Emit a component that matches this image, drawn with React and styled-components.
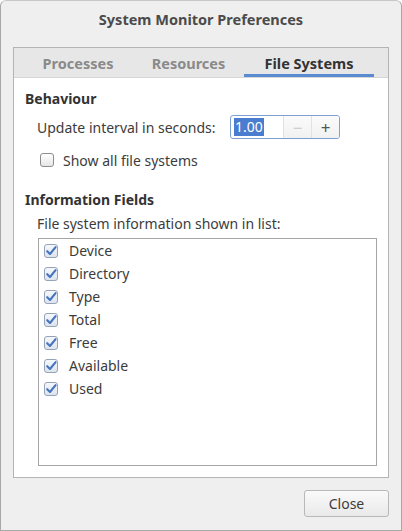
import React from "react";
import styled, { createGlobalStyle } from "styled-components";

const Global = createGlobalStyle`
  html, body { margin: 0; padding: 0; background: #ffffff; }
  body { width: 402px; height: 531px; overflow: hidden; font-family: "Noto Sans", "Open Sans", sans-serif; }
  * { box-sizing: border-box; }
`;

const Window = styled.div`
  width: 402px;
  height: 531px;
  background: #efefef;
  border: 1px solid #a8a8a8;
  border-top-color: #c8c8c8;
  border-radius: 6px 6px 0 0;
  display: flex;
  flex-direction: column;
  color: #3c3c3c;
`;

const TitleBar = styled.div`
  height: 34px;
  display: flex;
  align-items: center;
  justify-content: center;
  font-weight: 700;
  font-size: 14.5px;
  color: #4b4b4b;
  padding-top: 1px;
`;

const Body = styled.div`
  flex: 1;
  display: flex;
  flex-direction: column;
  padding: 12px 12px 0 12px;
`;

const Notebook = styled.div`
  height: 431px;
  border: 1px solid #b4b4b4;
  background: #ffffff;
  display: flex;
  flex-direction: column;
`;

const TabBar = styled.div`
  height: 30px;
  background: #e7e7e7;
  display: flex;
  padding-left: 9px;
  border-bottom: 1px solid #d6d6d6;
`;

const Tab = styled.div`
  width: ${p => p.$w}px;
  display: flex;
  align-items: center;
  justify-content: center;
  font-size: 14.5px;
  font-weight: 700;
  color: ${p => (p.$active ? "#333333" : "#8a8a8a")};
  border-bottom: 3px solid ${p => (p.$active ? "#5a8ad0" : "transparent")};
  padding-top: 3px;
`;

const Page = styled.div`
  flex: 1;
  display: flex;
  flex-direction: column;
  padding: 11px 11px 11px 11px;
`;

const Heading = styled.div`
  font-weight: 700;
  font-size: 14px;
  color: #333;
  height: 20px;
  line-height: 20px;
  margin-top: ${p => p.$mt || 0}px;
`;

const Row = styled.div`
  display: flex;
  align-items: center;
  padding-left: ${p => p.$indent || 12}px;
  height: ${p => p.$h}px;
  margin-top: ${p => p.$mt || 0}px;
  font-size: 14px;
  color: #3c3c3c;
`;

const Label = styled.span`
  width: 193px;
`;

const Spin = styled.div`
  width: 110px;
  height: 24px;
  border: 1px solid #7ea0d4;
  border-radius: 3px;
  display: flex;
  background: #fff;
  overflow: hidden;
`;

const SpinEntry = styled.div`
  flex: 1;
  display: flex;
  align-items: center;
  padding-left: 3px;
`;

const Selected = styled.span`
  background: #4a7cd0;
  color: #fff;
  font-size: 14px;
  line-height: 18px;
  padding: 0 1px;
`;

const SpinButton = styled.div`
  width: 28px;
  border-left: 1px solid #e2e2e2;
  background: linear-gradient(#fbfbfb, #f1f1f1);
  display: flex;
  align-items: center;
  justify-content: center;
  color: ${p => (p.$disabled ? "#c8c8c8" : "#555")};
  font-size: 17px;
  line-height: 1;
`;

const BoxUnchecked = styled.span`
  width: 14px;
  height: 14px;
  border: 1px solid #8d8d8d;
  border-radius: 3px;
  background: linear-gradient(#ffffff, #e6e6e6);
  margin-left: 3px;
  margin-right: 9px;
`;

const List = styled.div`
  margin: 4px 0 0 13px;
  flex: 1;
  border: 1px solid #a5a5a5;
  padding-top: 0;
  display: flex;
  flex-direction: column;
`;

const Item = styled.div`
  height: 23px;
  display: flex;
  align-items: center;
  padding-left: 4px;
  font-size: 14px;
  color: #3c3c3c;
  gap: 10px;
`;

const Footer = styled.div`
  display: flex;
  justify-content: flex-end;
  padding-top: 12px;
`;

const Button = styled.button`
  width: 85px;
  height: 27px;
  border: 1px solid #b8b8b8;
  border-radius: 3px;
  background: linear-gradient(#fafafa, #e9e9e9);
  font-family: "Noto Sans", "Open Sans", sans-serif;
  font-size: 14px;
  color: #3c3c3c;
  padding: 0;
`;

const Check = () => (
  <svg width="16" height="16" viewBox="0 0 16 16">
    <defs>
      <linearGradient id="cbg" x1="0" y1="0" x2="0" y2="1">
        <stop offset="0" stopColor="#f6f8fb" />
        <stop offset="1" stopColor="#dde3ec" />
      </linearGradient>
    </defs>
    <rect x="1.5" y="1.5" width="13" height="13" rx="2.5" fill="url(#cbg)" stroke="#95a3b9" />
    <path d="M4.2 8.2 L7 11 L12.6 4.2" fill="none" stroke="#4575be" strokeWidth="2.1" strokeLinecap="round" strokeLinejoin="round" />
  </svg>
);

const fields = ["Device", "Directory", "Type", "Total", "Free", "Available", "Used"];

export default function App() {
  return (
    <>
      <Global />
      <Window>
        <TitleBar>System Monitor Preferences</TitleBar>
        <Body>
          <Notebook>
            <TabBar>
              <Tab $w={110}>Processes</Tab>
              <Tab $w={111}>Resources</Tab>
              <Tab $w={130} $active>File Systems</Tab>
            </TabBar>
            <Page>
              <Heading>Behaviour</Heading>
              <Row $h={26} $mt={5}>
                <Label>Update interval in seconds:</Label>
                <Spin>
                  <SpinEntry><Selected>1.00</Selected></SpinEntry>
                  <SpinButton $disabled>−</SpinButton>
                  <SpinButton>+</SpinButton>
                </Spin>
              </Row>
              <Row $h={22} $mt={9} $indent={12}>
                <BoxUnchecked />
                Show all file systems
              </Row>
              <Heading $mt={19}>Information Fields</Heading>
              <Row $h={22} $mt={2}>File system information shown in list:</Row>
              <List>
                {fields.map(f => (
                  <Item key={f}>
                    <Check />
                    {f}
                  </Item>
                ))}
              </List>
            </Page>
          </Notebook>
          <Footer>
            <Button>Close</Button>
          </Footer>
        </Body>
      </Window>
    </>
  );
}
